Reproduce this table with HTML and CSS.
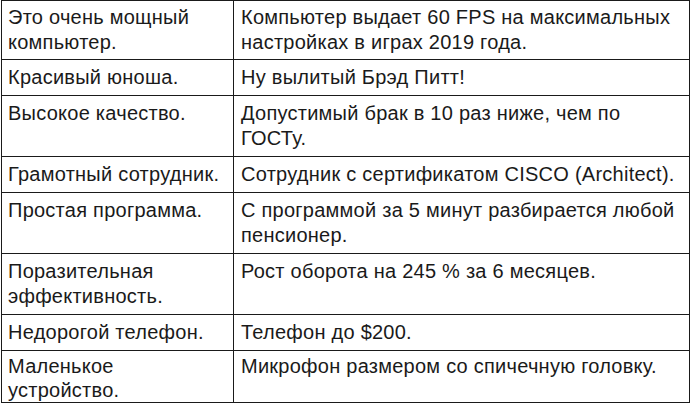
FILE: index.html
```html
<!DOCTYPE html>
<html lang="ru">
<head>
<meta charset="utf-8">
<link rel="stylesheet" href="styles.css">
</head>
<body>
<table class="claims">
  <colgroup><col class="col-a"><col class="col-b"></colgroup>
  <tbody>
    <tr><td>Это очень мощный компьютер.</td><td>Компьютер выдает 60 FPS на максимальных настройках в играх 2019 года.</td></tr>
    <tr><td>Красивый юноша.</td><td>Ну вылитый Брэд Питт!</td></tr>
    <tr><td>Высокое качество.</td><td>Допустимый брак в 10 раз ниже, чем по<br>ГОСТу.</td></tr>
    <tr><td>Грамотный сотрудник.</td><td>Сотрудник с сертификатом CISCO (Architect).</td></tr>
    <tr><td>Простая программа.</td><td>С программой за 5 минут разбирается любой пенсионер.</td></tr>
    <tr><td>Поразительная эффективность.</td><td>Рост оборота на 245 % за 6 месяцев.</td></tr>
    <tr><td>Недорогой телефон.</td><td>Телефон до $200.</td></tr>
    <tr class="last"><td>Маленькое устройство.</td><td>Микрофон размером со спичечную головку.</td></tr>
  </tbody>
</table>
</body>
</html>
```

FILE: styles.css
```css
html, body {
  margin: 0;
  padding: 0;
  background: #ffffff;
}
body {
  font-family: "Liberation Sans", Arial, sans-serif;
  color: #1a1a1a;
}
.claims {
  margin: 0 0 0 1px;
  border-collapse: collapse;
  table-layout: fixed;
  width: 688px;
  font-size: 20px;
  letter-spacing: 0.25px;
  line-height: 25px;
}
.col-a { width: 232px; }
.col-b { width: 456px; }
.claims td {
  border: 1px solid #1a1a1a;
  padding: 5px 4px 5px 7px;
  vertical-align: top;
  text-align: left;
}
.claims td:first-child {
  padding-left: 6px;
  padding-right: 8px;
}
.claims tr:first-child td {
  padding-top: 4px;
  padding-bottom: 4px;
}
.claims .last td {
  padding-top: 3px;
  padding-bottom: 0;
  line-height: 24px;
}
```
